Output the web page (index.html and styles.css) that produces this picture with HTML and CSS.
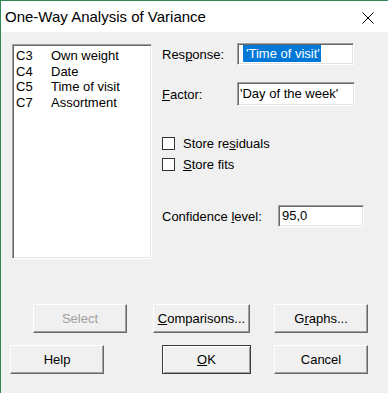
FILE: index.html
```html
<!DOCTYPE html>
<html lang="en">
<head>
  <meta charset="UTF-8" />
  <title>One-Way Analysis of Variance</title>
  <link rel="stylesheet" href="styles.css">
</head>
<body>
  <div class="dialog">
    <div class="titlebar">
      <span class="title">One-Way Analysis of Variance</span>
      <svg class="close" width="12" height="12" viewBox="0 0 12 12">
        <path d="M0.5 0.5 L11.5 11.5 M11.5 0.5 L0.5 11.5" stroke="#000" stroke-width="1" fill="none"/>
      </svg>
    </div>

    <div class="content">
      <div class="top">
        <div class="listbox">
          <div class="item"><span class="col">C3</span><span>Own weight</span></div>
          <div class="item"><span class="col">C4</span><span>Date</span></div>
          <div class="item"><span class="col">C5</span><span>Time of visit</span></div>
          <div class="item"><span class="col">C7</span><span>Assortment</span></div>
        </div>

        <div class="form">
          <div class="row">
            <span class="label">Res<u>p</u>onse:</span>
            <div class="field"><span class="selected">'Time of visit'</span></div>
          </div>
          <div class="row row-factor">
            <span class="label"><u>F</u>actor:</span>
            <div class="field field-tall">'Day of the week'</div>
          </div>

          <label class="check check-first"><span class="box"></span>Store re<u>s</u>iduals</label>
          <label class="check"><span class="box"></span><u>S</u>tore fits</label>

          <div class="row row-conf">
            <span class="label label-wide">Confidence <u>l</u>evel:</span>
            <div class="field field-short">95,0</div>
          </div>
        </div>
      </div>

      <div class="buttons buttons-first">
        <button class="btn btn-select" disabled>Select</button>
        <button class="btn btn-comp"><u>C</u>omparisons...</button>
        <button class="btn btn-graphs">G<u>r</u>aphs...</button>
      </div>
      <div class="buttons">
        <button class="btn btn-help">Help</button>
        <button class="btn btn-ok default"><u>O</u>K</button>
        <button class="btn btn-cancel">Cancel</button>
      </div>
    </div>
  </div>
</body>
</html>
```

FILE: styles.css
```css
body {
  margin: 0;
  background: #f0f0f0;
  font-family: "Liberation Sans", Arial, sans-serif;
  font-size: 13px;
  color: #000;
}

.dialog {
  width: 387px;
  height: 392px;
  border-top: 1px solid #2f8a57;
  border-left: 1px solid #2f8a57;
  background: #f0f0f0;
}

.titlebar {
  height: 31px;
  background: #fff;
  display: flex;
  align-items: center;
  justify-content: space-between;
  padding: 0 14px 0 4px;
}

.title {
  font-size: 15px;
  margin-top: -1px;
}

.close {
  margin-top: 3px;
}

.content {
  padding: 12px 0 0 11px;
}

.top {
  display: flex;
  align-items: flex-start;
}

.listbox {
  width: 135px;
  height: 210px;
  background: #fff;
  border: 1px solid;
  border-color: #a0a0a0 #fff #fff #a0a0a0;
  box-shadow: inset 1px 1px 0 #696969, inset -1px -1px 0 #e3e3e3;
  padding: 3px 0 0 3px;
  margin-right: 10px;
}

.item {
  display: flex;
  height: 15.5px;
  line-height: 15.5px;
}

.col {
  width: 35px;
}

.form {
  margin-top: -1px;
}

.row {
  display: flex;
  align-items: center;
}

.label {
  width: 75px;
}

.label-wide {
  width: 116px;
}

.field {
  width: 108px;
  height: 18px;
  background: #fff;
  border: 1px solid;
  border-color: #a0a0a0 #fff #fff #a0a0a0;
  box-shadow: inset 1px 1px 0 #696969, inset -1px -1px 0 #e3e3e3;
  padding: 2px 4px 0 3px;
  white-space: nowrap;
  overflow: hidden;
}

.field-tall {
  height: 19px;
  width: 110px;
  padding-left: 2px;
  padding-top: 3px;
}

.field-short {
  width: 77px;
}

.selected {
  background: #0078d7;
  color: #fff;
  padding: 1px 1px 1px 3px;
  margin-left: 2px;
}

.row-factor {
  margin-top: 17px;
}

.check {
  display: flex;
  align-items: center;
  height: 15px;
  margin-top: 6px;
}

.check-first {
  margin-top: 30px;
}

.box {
  width: 11px;
  height: 11px;
  background: #fff;
  border: 1px solid #333;
  margin-right: 8px;
}

.row-conf {
  margin-top: 33px;
}

.buttons {
  display: flex;
}

.buttons-first {
  margin-top: 45px;
  padding-left: 21px;
}

.buttons + .buttons {
  margin-top: 12px;
  margin-left: -2px;
}

.btn {
  height: 29px;
  width: 94px;
  font-family: "Liberation Sans", Arial, sans-serif;
  font-size: 13px;
  color: #000;
  background: #f0f0f0;
  border: 1px solid;
  border-color: #fff #696969 #696969 #fff;
  box-shadow: inset -1px -1px 0 #a0a0a0;
  padding: 0;
}

.btn:disabled {
  color: #a0a0a0;
}

.btn-comp {
  width: 97px;
  margin-left: 26px;
}

.btn-graphs {
  margin-left: 24px;
}

.btn-ok {
  width: 89px;
  margin-left: 58px;
}

.btn-cancel {
  margin-left: 23px;
}

.default {
  border-color: #3c3c3c;
  box-shadow: inset 1px 1px 0 #fff, inset -1px -1px 0 #a0a0a0;
}
```
